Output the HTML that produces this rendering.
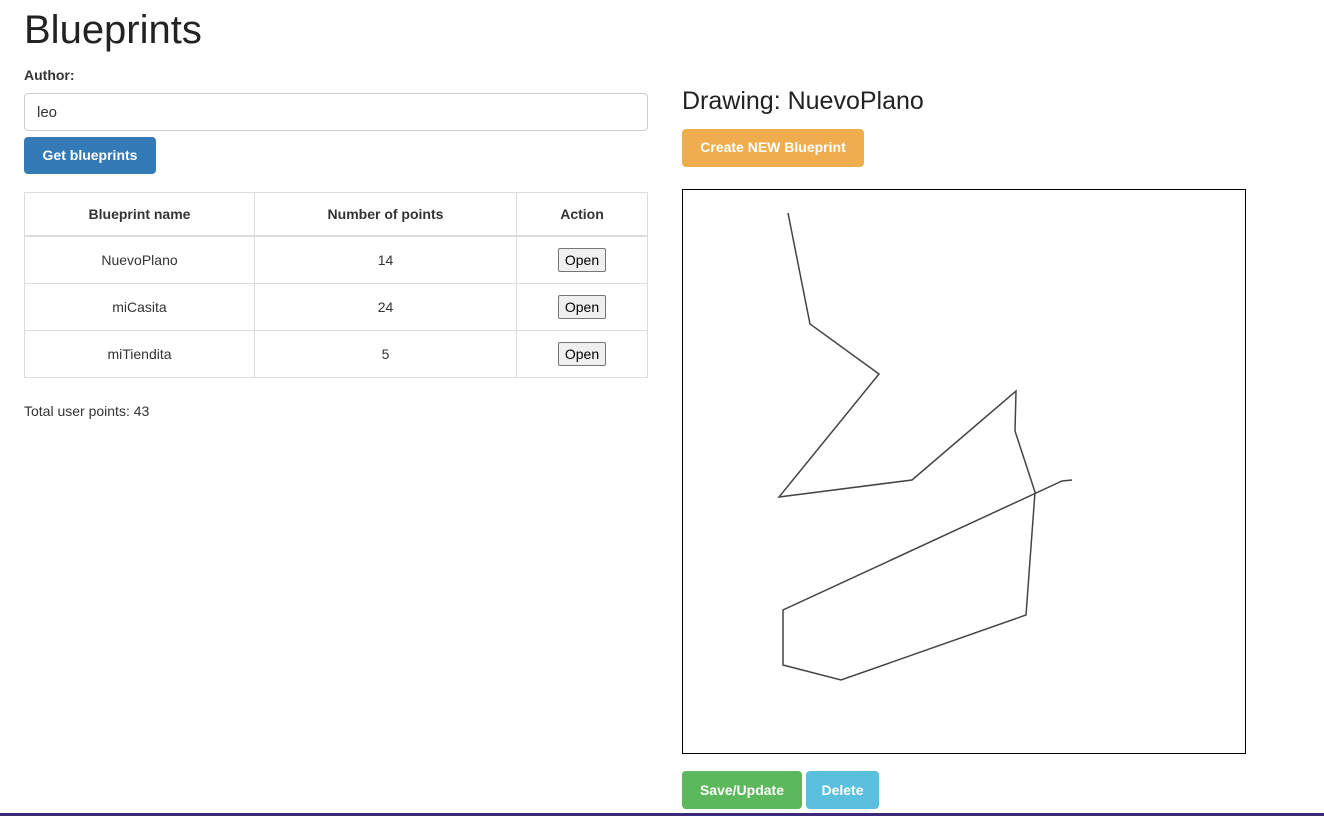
<!DOCTYPE html>
<html><head><meta charset="utf-8"><style>
body{margin:0;width:1324px;height:816px;overflow:hidden;background:#fff;font-family:"Liberation Sans",sans-serif;color:#333;position:relative}
.a{position:absolute}
h1{position:absolute;left:24px;top:8px;margin:0;font-size:40px;font-weight:normal;color:#222}
.btn{position:absolute;color:#fff;font-weight:bold;font-size:14px;border-radius:4px;text-align:center;box-sizing:border-box}
table{position:absolute;left:24px;top:192px;width:624px;border-collapse:collapse;font-size:14px}
td,th{border:1px solid #ddd;text-align:center;padding:0}
th{height:42px;border-bottom:2px solid #ddd}
td{height:46px}
.o{display:inline-block;border:1px solid #767676;background:#efefef;border-radius:2px;padding:3px 6px;font-size:14px;color:#000}
</style></head><body>
<h1>Blueprints</h1>
<div class="a" style="left:24px;top:67px;font-size:14px;font-weight:bold">Author:</div>
<div class="a" style="left:24px;top:93px;width:624px;height:38px;box-sizing:border-box;border:1px solid #ccc;border-radius:4px;padding:10px 12px;font-size:15px">leo</div>
<div class="btn" style="left:24px;top:137px;width:132px;height:37px;line-height:37px;background:#337ab7">Get blueprints</div>
<table>
<tr><th style="width:229px">Blueprint name</th><th style="width:261px">Number of points</th><th>Action</th></tr>
<tr><td>NuevoPlano</td><td>14</td><td><span class="o">Open</span></td></tr>
<tr><td>miCasita</td><td>24</td><td><span class="o">Open</span></td></tr>
<tr><td>miTiendita</td><td>5</td><td><span class="o">Open</span></td></tr>
</table>
<div class="a" style="left:24px;top:403px;font-size:14px">Total user points: 43</div>
<div class="a" style="left:682px;top:87px;font-size:25px;color:#222">Drawing: NuevoPlano</div>
<div class="btn" style="left:682px;top:129px;width:182px;height:38px;line-height:36px;background:#f0ad4e">Create NEW Blueprint</div>
<div class="a" style="left:682px;top:189px;width:564px;height:565px;box-sizing:border-box;border:1px solid #000">
<svg width="562" height="563" style="position:absolute;left:0;top:0"><polyline fill="none" stroke="#444" stroke-width="1.5" points="105,23 127,134 196,184 96,307 229,290 333,201 332,241 352,302 343,425 158,490 100,475 100,420 379,291 389,290"/></svg>
</div>
<div class="btn" style="left:682px;top:771px;width:120px;height:38px;line-height:38px;background:#5cb85c">Save/Update</div>
<div class="btn" style="left:806px;top:771px;width:73px;height:38px;line-height:38px;background:#5bc0de">Delete</div>
<div class="a" style="left:0;top:813px;width:1324px;height:3px;background:#3b2a7a"></div>
</body></html>
